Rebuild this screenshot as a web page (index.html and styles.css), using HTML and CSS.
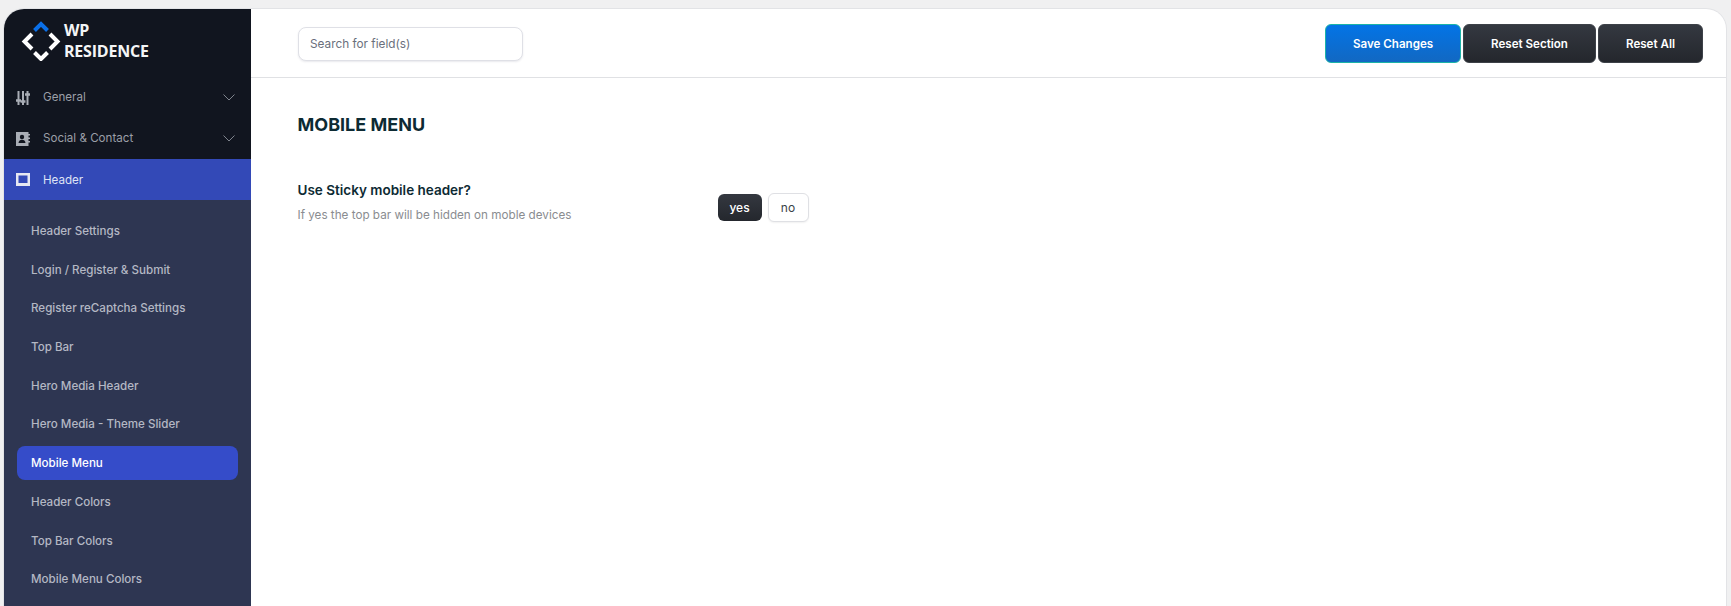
FILE: index.html
```html
<!DOCTYPE html>
<html lang="en">
<head>
  <meta charset="UTF-8" />
  <title>WP Residence Options</title>
  <link rel="stylesheet" href="styles.css">
</head>
<body>
  <div class="panel">
    <aside class="sidebar">
      <div class="logo">
        <svg class="logo-mark" width="40" height="40" viewBox="0 0 40 40">
          <path d="M13.500 9.500 L20 3 L26.500 9.500" fill="none" stroke="#0a6fe8" stroke-width="4"/>
          <path d="M11 13 L3.500 20.500 L11 28" fill="none" stroke="#fff" stroke-width="4"/>
          <path d="M29 13 L36.500 20.500 L29 28" fill="none" stroke="#fff" stroke-width="4"/>
          <path d="M13.500 31.500 L20 38 L26.500 31.500" fill="none" stroke="#fff" stroke-width="4"/>
        </svg>
        <div class="logo-text">WP<br>RESIDENCE</div>
      </div>

      <a class="nav-item">
        <svg class="nav-icon" width="14" height="14" viewBox="0 0 14 14">
          <path d="M2.500 0v14M7 0v14M11.500 0v14" stroke="#a9adb5" stroke-width="2"/>
          <path d="M0 9.500h5M4.500 10.500h5M9 3.500h5" stroke="#a9adb5" stroke-width="2.500"/>
          <path d="M5 8.200h0.600M9.200 6.500h0.600" stroke="#11151f" stroke-width="1"/>
        </svg>
        <span>General</span>
        <svg class="chevron" width="12" height="7" viewBox="0 0 12 7"><path d="M.5.5 6 6l5.500-5.500" fill="none" stroke="#7f848d"/></svg>
      </a>
      <a class="nav-item">
        <svg class="nav-icon" width="14" height="14" viewBox="0 0 14 14">
          <path d="M0 0h12.500v2H14v1.500h-1.500v2H14V7h-1.500v2H14v1.500h-1.500V14H0z" fill="#a9adb5"/>
          <circle cx="6" cy="5" r="2.200" fill="#11151f"/>
          <path d="M2.500 11c0-4.500 7-4.500 7 0z" fill="#11151f"/>
        </svg>
        <span>Social &amp; Contact</span>
        <svg class="chevron" width="12" height="7" viewBox="0 0 12 7"><path d="M.5.5 6 6l5.500-5.500" fill="none" stroke="#7f848d"/></svg>
      </a>
      <a class="nav-item open">
        <svg class="nav-icon" width="14" height="14" viewBox="0 0 14 14">
          <path d="M0 0h14v13H0z M2.500 2.500v7.500h9V2.500z" fill-rule="evenodd" fill="#e6e8f2"/>
        </svg>
        <span>Header</span>
      </a>

      <nav class="submenu">
        <a>Header Settings</a>
        <a>Login / Register &amp; Submit</a>
        <a>Register reCaptcha Settings</a>
        <a>Top Bar</a>
        <a>Hero Media Header</a>
        <a>Hero Media - Theme Slider</a>
        <a class="active">Mobile Menu</a>
        <a>Header Colors</a>
        <a>Top Bar Colors</a>
        <a>Mobile Menu Colors</a>
      </nav>
    </aside>

    <main class="content">
      <header class="topbar">
        <input type="text" class="search" placeholder="Search for field(s)" />
        <div class="actions">
          <button class="btn btn-save">Save Changes</button>
          <button class="btn btn-section">Reset Section</button>
          <button class="btn btn-all">Reset All</button>
        </div>
      </header>

      <section class="section">
        <h1>MOBILE MENU</h1>
        <div class="field">
          <div class="field-info">
            <h2>Use Sticky mobile header?</h2>
            <p>If yes the top bar will be hidden on moble devices</p>
          </div>
          <div class="toggle">
            <button class="toggle-yes">yes</button>
            <button class="toggle-no">no</button>
          </div>
        </div>
      </section>
    </main>
  </div>
</body>
</html>
```

FILE: styles.css
```css
* {
  box-sizing: border-box;
}

html, body {
  height: 100%;
}

body {
  margin: 0;
  padding: 9px 5px 0 4px;
  background-color: #f0f0f1;
  font-family: 'Inter', sans-serif;
  overflow: hidden;
}

.panel {
  display: flex;
  height: 597px;
  background-color: #fff;
  border-radius: 20px 20px 0 0;
  overflow: hidden;
  box-shadow: 0 0 0 1px #e2e3e6;
}

.sidebar {
  width: 247px;
  flex-shrink: 0;
  background-color: #11151f;
}

.logo {
  display: flex;
  align-items: center;
  gap: 3px;
  height: 68px;
  padding: 0 0 4px 17px;
}

.logo-text {
  font-family: 'Open Sans', sans-serif;
  font-size: 16px;
  font-weight: 700;
  line-height: 21px;
  color: #f4f5f6;
  letter-spacing: -0.2px;
}

.nav-item {
  display: flex;
  align-items: center;
  height: 41px;
  padding: 0 16px 0 12px;
  font-size: 11.600px;
  color: #9b9fa7;
}

.nav-item span {
  flex: 1;
  margin-left: 13px;
  margin-bottom: 2px;
}

.nav-item.open {
  background-color: #3349b7;
  color: #dfe3f5;
}

.nav-item.open span {
  margin-bottom: 0;
}

.submenu {
  display: flex;
  flex-direction: column;
  gap: 4.700px;
  height: 406px;
  padding: 14px 13px 0;
  background-color: #2e3652;
}

.submenu a {
  display: flex;
  align-items: center;
  height: 34px;
  flex-shrink: 0;
  padding: 0 14px;
  border-radius: 8px;
  font-size: 11.600px;
  font-weight: 500;
  color: #b4b8c4;
}

.submenu a.active {
  background-color: #354cc9;
  color: #fff;
}

.content {
  flex: 1;
}

.topbar {
  display: flex;
  align-items: center;
  justify-content: space-between;
  height: 69px;
  padding: 1px 23px 0 47px;
  border-bottom: 1px solid #e0e1e4;
}

.search {
  width: 225px;
  height: 34px;
  padding: 0 11px;
  border: 1px solid #dfe0e6;
  border-radius: 8px;
  box-shadow: 0 1px 2px rgba(40, 40, 80, 0.1);
  font-family: inherit;
  font-size: 11.800px;
  outline: none;
}

.search::placeholder {
  color: #6a6f7c;
  opacity: 1;
}

.actions {
  display: flex;
  gap: 2px;
}

.btn {
  height: 39px;
  padding: 1px 0 0;
  border-radius: 6px;
  font-family: inherit;
  font-size: 11.600px;
  font-weight: 600;
  color: #fff;
}

.btn-save {
  width: 136px;
  background: linear-gradient(#0374e6, #1268c2);
  border: 1px solid #1bb3a8;
}

.btn-section,
.btn-all {
  background: linear-gradient(#343840, #24272d);
  border: 1px solid #3d4148;
}

.btn-section {
  width: 133px;
}

.btn-all {
  width: 105px;
}

.section {
  padding: 36px 47px 36px 46.500px;
}

h1 {
  margin: 0;
  font-size: 18px;
  font-weight: 700;
  line-height: 22px;
  color: #0d2a33;
}

.field {
  display: flex;
  margin-top: 44px;
}

.field-info {
  width: 420px;
}

h2 {
  margin: 0;
  font-size: 13.500px;
  font-weight: 600;
  line-height: 20px;
  color: #0d2a33;
}

.field-info p {
  margin: 7px 0 0;
  font-size: 11.700px;
  line-height: 16px;
  color: #8a8c90;
}

.toggle {
  display: flex;
  align-items: center;
  gap: 6px;
  margin-top: 13px;
  height: 29px;
}

.toggle button {
  font-family: inherit;
  font-size: 12px;
}

.toggle-yes {
  width: 44px;
  height: 27px;
  border: none;
  border-radius: 6px;
  background: linear-gradient(#343840, #24272d);
  color: #fff;
  font-weight: 500;
}

.toggle-no {
  width: 41px;
  height: 29px;
  border: 1px solid #dfe0e4;
  border-radius: 6px;
  background-color: #fff;
  color: #3a3f48;
  box-shadow: 0 1px 2px rgba(0, 0, 0, 0.06);
}
```
